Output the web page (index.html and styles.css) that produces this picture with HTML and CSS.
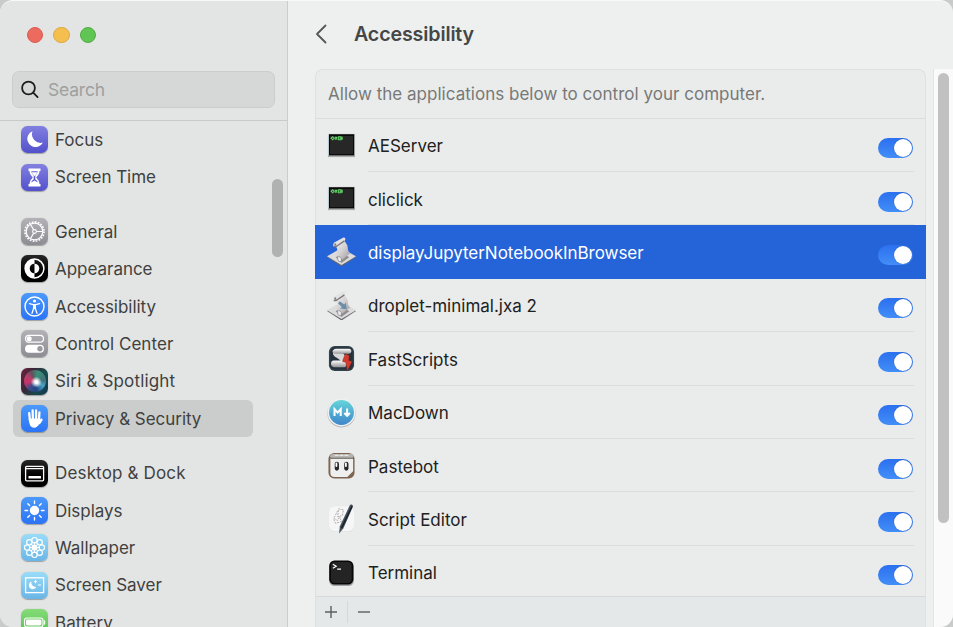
FILE: index.html
```html
<!DOCTYPE html>
<html lang="en">
<head>
<meta charset="utf-8">
<title>Accessibility</title>
<link rel="stylesheet" href="styles.css">
</head>
<body>
<svg class="defs" width="0" height="0" aria-hidden="true">
  <defs>
    <linearGradient id="paper" x1="0" y1="0" x2="1" y2="1"><stop offset="0" stop-color="#f2f1f2"/><stop offset=".5" stop-color="#d3d1d2"/><stop offset="1" stop-color="#9c9a9d"/></linearGradient>
    <linearGradient id="md" x1="0" y1="0" x2="0" y2="1"><stop offset="0" stop-color="#66d5d9"/><stop offset="1" stop-color="#3e86cb"/></linearGradient>
    <linearGradient id="roll" x1="0" y1="0" x2="0" y2="1"><stop offset="0" stop-color="#fff"/><stop offset="1" stop-color="#969496"/></linearGradient>
    <symbol id="exec" viewBox="0 0 30 30">
      <rect x="1" y="3" width="28" height="24" fill="#a9aaab"/><rect x="1" y="3" width="1" height="22" fill="#c9dbe2"/>
      <rect x="2" y="3.400" width="26" height="21.800" fill="#050505"/><rect x="3" y="5" width="24" height="19" fill="#272727"/>
      <path d="M4.300 7.500l1.600-1.600 1.600 1.600-1.600 1.600zM8.300 6l2.400 3M10.700 6l-2.400 3M12 6h2.500v3H12zM15.700 6v3M13 7.500h3" fill="none" stroke="#5fd264" stroke-width="1.100"/>
    </symbol>
    <symbol id="scroll" viewBox="0 0 30 30">
      <path d="M0 20.800L15 12l15 8.800L15 30.500z" fill="#69676c"/><path d="M0 20L15 11.500 30 20 15 29z" fill="#dddcdd"/>
      <path d="M9 21l6 6 8-6-6-4z" fill="#8f8d90"/>
      <path d="M8 8c1 2 3 3 2.500 6C10 17 9 18 11 20.500l4.500 3L24 17c-3-3-2-5-3-8.500L17.500 3z" fill="url(#paper)"/>
      <path d="M6.500 9.200C6 6.500 7.500 5.500 9 5l8-4.500c2-.4 2.500 1.500 1.500 3L10 9.500c-1.500 1.200-3 1-3.500-.3z" fill="#e3e2e3"/>
      <path d="M7 9.800c2 .8 3-.4 4-1l7-4.800" fill="none" stroke="#79777b" stroke-width="1.400"/>
      <ellipse cx="8.500" cy="7.800" rx="1" ry="1.400" fill="#858287"/>
      <path d="M10.500 20.500c3-.8 5.500 1.500 4 4.500-1 1-3 .5-3-1 0-1-1-2-1-3.500z" fill="#ecebec" stroke="#7f7d81" stroke-width=".7"/>
    </symbol>
  </defs>
</svg>
<div class="window">
  <aside class="sidebar">
    <div class="lights"><i class="red"></i><i class="yellow"></i><i class="green"></i></div>
    <div class="search">
      <svg width="20" height="20" viewBox="0 0 20 20" fill="none" stroke="#1d1d1d" stroke-width="1.800" stroke-linecap="round"><circle cx="7.500" cy="8" r="6.400"/><path d="M12.200 12.700l4.400 4.400"/></svg>
      <span>Search</span>
    </div>
    <nav class="nav">
      <div class="group">
        <div class="item"><svg class="ic indigo" viewBox="0 0 27 27"><path d="M11.500 5.200a8.200 8.200 0 1 0 10.300 11.400A8.700 8.700 0 0 1 11.500 5.200z" fill="#fff"/></svg><span>Focus</span></div>
        <div class="item"><svg class="ic indigo" viewBox="0 0 27 27"><path d="M7.500 4.500h12v2.600h-1c0 3.400-2.300 4.800-3.300 6.400 1 1.600 3.300 3 3.300 6.400h1v2.600h-12v-2.600h1c0-3.400 2.300-4.800 3.300-6.400-1-1.600-3.300-3-3.300-6.400h-1z" fill="#fff"/><path d="M10.300 7.200h6.400c0 2.300-1.600 3.200-2.400 4.400v3.600c1 .8 2.400 1.800 2.400 3.200l-3.200-1.800-3.200 1.800c0-1.400 1.400-2.400 2.400-3.200v-3.600c-.8-1.200-2.400-2.100-2.400-4.400z" fill="#5d5bd0"/><path d="M10.300 8.200h6.400l-3.200 4z" fill="#fff"/></svg><span>Screen Time</span></div>
      </div>
      <div class="group">
        <div class="item"><svg class="ic gray" viewBox="0 0 27 27" fill="none" stroke="#fff"><circle cx="13.500" cy="13.500" r="9.600" stroke-width="1.600" stroke-dasharray="1.750 1.266"/><circle cx="13.500" cy="13.500" r="8.300" stroke-width="1.200"/><circle cx="13.500" cy="13.500" r="1.900" stroke-width="1.100"/><path d="M15.400 13.500h6.400M12.600 11.800L9.400 6.300M12.600 15.200l-3.200 5.500" stroke-width="1.200"/></svg><span>General</span></div>
        <div class="item"><svg class="ic black" viewBox="0 0 27 27"><circle cx="13.500" cy="13.500" r="9.400" fill="none" stroke="#fff" stroke-width="1.500"/><path d="M13.500 4.100a9.400 9.400 0 0 0 0 18.800v-4.600a4.800 4.800 0 0 1 0-9.600z" fill="#fff"/><path d="M13.500 8.700a4.800 4.800 0 0 1 0 9.600z" fill="#fff"/></svg><span>Appearance</span></div>
        <div class="item"><svg class="ic blue" viewBox="0 0 27 27"><circle cx="13.500" cy="13.500" r="9.500" fill="none" stroke="#fff" stroke-width="1.400"/><circle cx="13.500" cy="8" r="1.600" fill="#fff"/><path d="M8.500 10.700l3.600.9h2.800l3.600-.9M12.700 12v3.300l-1.700 5M14.300 12v3.300l1.700 5" fill="none" stroke="#fff" stroke-width="1.300" stroke-linecap="round"/><path d="M12 11.400h3v4.600h-3z" fill="#fff"/></svg><span>Accessibility</span></div>
        <div class="item"><svg class="ic gray" viewBox="0 0 27 27"><rect x="4.500" y="5.400" width="18" height="6.800" rx="3.400" fill="none" stroke="#fff" stroke-width="1.200"/><circle cx="8.200" cy="8.800" r="2.500" fill="#fff"/><rect x="4" y="14.700" width="19" height="8" rx="4" fill="#fff"/><circle cx="19" cy="18.700" r="2.700" fill="#9a999e"/></svg><span class="wide">Control Center</span></div>
        <div class="item"><span class="ic siri"><i></i></span><span class="wider">Siri &amp; Spotlight</span></div>
        <div class="item selected"><svg class="ic blue" viewBox="0 0 27 27" fill="none" stroke="#fff" stroke-linecap="round"><path d="M8.200 8.200l.7 7M11.600 5.300l.3 9M15.100 5.300V14M18.400 7.500l-.4 7M20.500 14.800L18.300 18" stroke-width="2.300"/><path d="M7.800 13.500h11.400c1 .6.300 3.200-.7 4.800-1.500 2.800-3 4.500-5.500 4.500-3.600 0-5-4-5.200-9.300z" fill="#fff" stroke="none"/></svg><span>Privacy &amp; Security</span></div>
      </div>
      <div class="group">
        <div class="item"><svg class="ic black" viewBox="0 0 27 27"><rect x="4.600" y="6.400" width="18" height="14.400" rx="1" fill="none" stroke="#fff" stroke-width="1.300"/><path d="M4.600 8.700h18" stroke="#fff" stroke-width="1.300"/><rect x="7.500" y="16" width="12.500" height="2.600" rx=".6" fill="#fff"/></svg><span class="wider">Desktop &amp; Dock</span></div>
        <div class="item"><svg class="ic blue" viewBox="0 0 27 27"><circle cx="13.500" cy="13.500" r="4.700" fill="#fff"/><path d="M13.500 4v2.600M13.500 20.400V23M4 13.500h2.600M20.400 13.500H23M6.800 6.800l1.800 1.800M18.400 18.400l1.800 1.800M6.800 20.200l1.800-1.800M18.400 8.600l1.800-1.800" stroke="#fff" stroke-width="1.400" stroke-linecap="round"/></svg><span>Displays</span></div>
        <div class="item"><svg class="ic sky" viewBox="0 0 27 27" fill="none" stroke="#fff" stroke-width="1.150"><circle cx="13.500" cy="6.200" r="2.700"/><circle cx="18.660" cy="8.340" r="2.700"/><circle cx="20.800" cy="13.500" r="2.700"/><circle cx="18.660" cy="18.660" r="2.700"/><circle cx="13.500" cy="20.800" r="2.700"/><circle cx="8.340" cy="18.660" r="2.700"/><circle cx="6.200" cy="13.500" r="2.700"/><circle cx="8.340" cy="8.340" r="2.700"/><path d="M13.500 8v11M8 13.500h11M9.600 9.600l7.800 7.800M17.400 9.600l-7.800 7.800"/><circle cx="13.500" cy="13.500" r="2.300"/></svg><span>Wallpaper</span></div>
        <div class="item"><svg class="ic sky" viewBox="0 0 27 27"><rect x="4.600" y="5.800" width="18" height="14.800" fill="none" stroke="#fff" stroke-width="1.300"/><path d="M10.500 9.500a4 4 0 1 0 5 5.300 4.200 4.200 0 0 1-5-5.300z" fill="#fff"/><path d="M14.500 8.200v3M13 9.700h3M17 13h3" stroke="#fff" stroke-width="1"/></svg><span>Screen Saver</span></div>
        <div class="item"><svg class="ic lime" viewBox="0 0 27 27"><rect x="3.500" y="9" width="18.500" height="9" rx="2.500" fill="none" stroke="#fff" stroke-width="1.100"/><rect x="5" y="10.500" width="15.500" height="6" rx="1.400" fill="#fff"/><path d="M23.500 12v3" stroke="#fff" stroke-width="1.300" stroke-linecap="round"/></svg><span class="wide">Battery</span></div>
      </div>
    </nav>
    <div class="side-thumb"></div>
  </aside>
  <main class="main">
    <header class="head">
      <svg width="14" height="20" viewBox="0 0 14 20" fill="none" stroke="#555656" stroke-width="1.800" stroke-linecap="round" stroke-linejoin="round"><path d="M11.500 1.500L3 10l8.500 8.500"/></svg>
      <h1>Accessibility</h1>
    </header>
    <div class="content">
      <section class="card">
        <p class="intro">Allow the applications below to control your computer.</p>
        <ul class="apps">
          <li><svg class="app"><use href="#exec"/></svg><div><span>AEServer</span><b class="toggle"></b></div></li>
          <li><svg class="app"><use href="#exec"/></svg><div><span>cliclick</span><b class="toggle"></b></div></li>
          <li class="active"><svg class="app"><use href="#scroll"/></svg><div><span>displayJupyterNotebookInBrowser</span><b class="toggle"></b></div></li>
          <li><svg class="app" viewBox="0 0 30 30"><use href="#scroll"/><path d="M13 10.500l5 3.500 1.500-2 1 7-7-1 2-1.500-4-3.500z" fill="#6e8da9"/></svg><div><span>droplet-minimal.jxa 2</span><b class="toggle"></b></div></li>
          <li><svg class="app" viewBox="0 0 30 30"><rect x="2" y="2" width="26" height="26" rx="6" fill="#33414b"/><rect x="3.500" y="3.500" width="23" height="23" rx="4.500" fill="#25323b"/><path d="M6.500 8C5 12 9 13.500 12 15.500l3 2.500 5 1c2-4-1-7-3.500-9.500z" fill="#d9d8d8"/><path d="M9 5h14c3 .5 3 4.500 0 5H10c-5 1-6-4-1-5z" fill="url(#roll)"/><path d="M7 17h11c3 0 3 7 0 7H8c-5 0-5-7-1-7z" fill="url(#roll)"/><path d="M19 10l-3 8 3.500 1L21 28l5-10-3.500-1 .5-5z" fill="#d63a2c" stroke="#7d241e" stroke-width=".5"/></svg><div><span>FastScripts</span><b class="toggle"></b></div></li>
          <li><svg class="app" viewBox="0 0 30 30"><circle cx="15" cy="15.800" r="14.600" fill="#b5b7b7"/><circle cx="15" cy="15" r="14.400" fill="#eef0f1"/><circle cx="15" cy="15" r="12.900" fill="url(#md)"/><path d="M7.800 18.500v-7l3.200 3.600 3.200-3.600v7M20.800 10.800v7M17.900 15.500l2.900 2.900 2.900-2.900" fill="none" stroke="#fff" stroke-width="2.100"/></svg><div><span>MacDown</span><b class="toggle"></b></div></li>
          <li><svg class="app" viewBox="0 0 30 30"><rect x="1.500" y="2" width="27" height="26.500" rx="6" fill="#7e6552"/><rect x="3.300" y="3" width="24" height="5" rx="2.500" fill="#b8b4b0"/><path d="M3.500 8h23.500v13l-6 6H8q-4.500 0-4.500-4.500z" fill="#efefef"/><path d="M3.500 7.500H27" stroke="#777370" stroke-width="1.200"/><path d="M8 4.500h14" stroke="#e8e8e8" stroke-width="1.400" stroke-dasharray="4 1"/><rect x="8" y="11" width="4.400" height="9.400" rx="2.200" fill="#282828"/><rect x="17.800" y="11" width="4.400" height="9.400" rx="2.200" fill="#282828"/><rect x="8.800" y="12" width="1.900" height="4.500" rx=".9" fill="#fff"/><rect x="18.600" y="12" width="1.900" height="4.500" rx=".9" fill="#fff"/></svg><div><span>Pastebot</span><b class="toggle"></b></div></li>
          <li><svg class="app" viewBox="0 0 30 30"><rect x="2" y="3" width="26" height="26" rx="6" fill="#d5d6d6"/><rect x="2" y="2.500" width="26" height="26" rx="6" fill="#f6f6f6"/><path d="M12 5l5 1-1 6-5 1zM11 7l-4 8 4 2 2-4M7 16l2 4 6-2-2-5" fill="none" stroke="#999" stroke-width=".8" stroke-dasharray="2 1"/><path d="M23.500 1.500c1-1.800 4-.6 3.200 1.500L17 25l-4.500 5.500.8-7.500z" fill="#46515c"/><path d="M25.800 2.500L15 25" stroke="#18202a" stroke-width="1.500"/></svg><div><span>Script Editor</span><b class="toggle"></b></div></li>
          <li><svg class="app" viewBox="0 0 30 30"><rect x="2.200" y="4" width="25.600" height="25" rx="5.500" fill="#a1a3a4"/><rect x="2.300" y="2.500" width="25" height="25" rx="5.500" fill="#060606"/><rect x="4" y="4.200" width="21.600" height="21.600" rx="4" fill="#242424"/><path d="M6 6.500l3.500 2L6 10.500M10.500 11.500h4" fill="none" stroke="#fff" stroke-width="1.200"/></svg><div><span>Terminal</span><b class="toggle"></b></div></li>
        </ul>
        <footer class="foot">
          <span class="add"><svg width="14" height="14" viewBox="0 0 14 14"><path d="M7 1v12M1 7h12" stroke="#5d5f5f" stroke-width="1.400"/></svg></span>
          <span class="remove"><svg width="14" height="14" viewBox="0 0 14 14"><path d="M1 7h12" stroke="#5d5f5f" stroke-width="1.400"/></svg></span>
        </footer>
      </section>
      <div class="track"><div class="thumb"></div></div>
    </div>
  </main>
</div>
</body>
</html>
```
FILE: styles.css
```css
* { box-sizing: border-box; }
body { margin: 0; width: 953px; height: 627px; overflow: hidden; background: #c9cbcb; font-family: Inter, "Liberation Sans", sans-serif; font-size: 17px; }
.defs { display: block; }
.window { display: flex; width: 953px; height: 627px; border-radius: 13px; overflow: hidden; background: #eef0f0; border-top: 1px solid #f8f8f8; }

.sidebar { position: relative; width: 288px; flex: none; overflow: hidden; background: #e3e5e4; border-right: 1px solid #cbcdcc; display: flex; flex-direction: column; }
.lights { display: flex; gap: 10.500px; padding: 25.500px 0 0 26.500px; height: 70px; }
.lights i { width: 16.300px; height: 16.300px; border-radius: 50%; border: 1px solid transparent; }
.lights .red { background: #ed6a5e; border-color: #da5a50; }
.lights .yellow { background: #f5bf4f; border-color: #dda944; }
.lights .green { background: #61c554; border-color: #50ae42; }
.search { margin: 0 12px; height: 37px; flex: none; border: 1px solid #cbcdcc; border-radius: 7px; background: #d6d8d7; display: flex; align-items: center; gap: 7px; padding-left: 8px; color: #9da09f; }
.search span { font-size: 17.500px; letter-spacing: -.2px; }
.nav { margin-top: 12px; border-top: 1px solid #c9cbca; flex: 1; overflow: hidden; }
.group { margin-bottom: 17.100px; }
.item { height: 37.400px; width: 240px; margin-left: 13px; padding-left: 8px; display: flex; align-items: center; gap: 7px; color: #3f4140; white-space: nowrap; letter-spacing: -.03px; border-radius: 6px; }
.item span { padding-top: .6px; }
.item .wide { letter-spacing: .06px; }
.item .wider { letter-spacing: .16px; }
.item.selected { background: #cbcdcc; }
.ic { width: 27px; height: 27px; border-radius: 6.500px; flex: none; box-shadow: 0 .5px 1px rgba(0,0,0,.3); display: block; }
.indigo { background: linear-gradient(#8280e0, #5351cb); }
.gray { background: linear-gradient(#b3b2b7, #8d8c92); }
.black { background: linear-gradient(#272727, #000 60%); }
.blue { background: linear-gradient(#4b99fb, #2b74f5); }
.sky { background: linear-gradient(#99dcf8, #69b5e7); }
.lime { background: linear-gradient(#86dc77, #50bf4c); }
.item .siri { background: linear-gradient(115deg, #74203c, #37283b 35%, #174c4a 65%, #123856); padding: 2.500px; }
.siri i { display: block; width: 22px; height: 22px; border-radius: 50%; background: radial-gradient(ellipse at 56% 55%, #fff 0 8%, transparent 32%), conic-gradient(from 20deg, #3a9079, #3f6f78 18%, #49a4c8 28%, #214580 42%, #394c88 54%, #c43569 66%, #b83f68 78%, #62505f 88%, #3a9079); }
.side-thumb { position: absolute; left: 272px; top: 178px; width: 11px; height: 78px; border-radius: 6px; background: #b0b2b1; }

.main { flex: 1; min-width: 0; display: flex; flex-direction: column; }
.head { height: 68px; flex: none; display: flex; align-items: center; padding: 0 0 1.500px 26px; gap: 26px; }
.head h1 { margin: 0; font-size: 19.700px; font-weight: 600; color: #454747; letter-spacing: -.16px; }
.content { flex: 1; min-height: 0; display: flex; justify-content: space-between; padding-left: 27px; }
.card { width: 611px; height: 558px; border: 1px solid #dfe1e0; border-bottom: 0; border-radius: 8px 8px 0 0; background: #eaeceb; display: flex; flex-direction: column; }
.intro { margin: 0; height: 48.600px; line-height: 48px; flex: none; padding-left: 12px; color: #777978; border-bottom: 1px solid #dbdddc; white-space: nowrap; letter-spacing: .02px; }
.apps { margin: 0 -1px; padding: 0; list-style: none; height: 477px; overflow: hidden; flex: none; }
.apps li { height: 53.400px; display: flex; align-items: stretch; gap: 12px; padding: 0 12px; color: #202121; }
.app { width: 29px; height: 29px; flex: none; margin-top: 12px; overflow: visible; }
.apps li > div { flex: 1; display: flex; align-items: center; justify-content: space-between; border-bottom: 1px solid #dcdedd; padding-top: 3px; white-space: nowrap; }
.apps li.active { background: #2563d9; color: #fff; }
.apps li.active span { letter-spacing: -.04px; }
.apps li.active > div, .apps li:last-child > div { border-bottom-color: transparent; }
.toggle { width: 35px; height: 20px; border-radius: 10px; background: linear-gradient(#2b70ef, #438ef8); margin-top: 4px; padding: 1px; display: flex; justify-content: flex-end; margin-right: 1px; }
.toggle::before { content: ""; width: 18px; height: 18px; border-radius: 50%; background: #fff; box-shadow: 0 0 1px rgba(0,20,80,.5); }
.foot { flex: 1; border-top: 1px solid #d7dad9; background: #e5e8e8; display: flex; align-items: flex-start; padding-top: 4px; }
.foot span { height: 22px; display: flex; align-items: center; }
.add { width: 32px; padding-left: 8px; border-right: 1px solid #d5d8d8; }
.remove { padding-left: 9px; }
.track { width: 20px; border-left: 1px solid #e3e5e4; background: #fafafa; padding: 4px 0 0 4px; }
.thumb { width: 11px; height: 450px; border-radius: 6px; background: #c1c1c1; }
```
